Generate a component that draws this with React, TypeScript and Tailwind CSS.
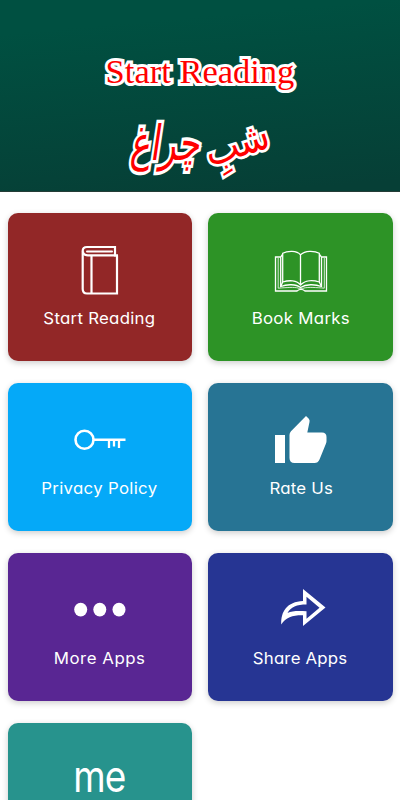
import React from "react";
import clsx from "clsx";

const BookIcon: React.FC = () => (
  <svg width="60" height="62" viewBox="0 0 60 62" fill="none" stroke="white" strokeWidth="2.2">
    <path d="M47 16.5V54.5H17Q12.7 54.5 12.7 50V12Q12.7 8 17 8H45V16.3H48" />
    <path d="M13 12.5Q13 16.3 18 16.3H46M21.5 17V54" />
    <path d="M42 12.5H17" strokeWidth="2" strokeLinecap="round" />
  </svg>
);

const BookmarkIcon: React.FC = () => (
  <svg width="66" height="56" viewBox="0 0 66 56" fill="none" stroke="white" strokeWidth="1.3" className="ml-[2px]">
    <path d="M32.5 12.8C29 8 19 8.8 14.7 11.3V40C21 38 29 38 32.5 43C37 38 45 38 51.3 40V11.3C47 8.8 37 8 32.5 12.8V43" />
    <path d="M14.5 12.5L12.7 15V44.5C19 42 28 42 32.5 45.5C38 42 47 42 53.5 44.5V15L51.5 12.5" />
    <path d="M14.7 40L12.7 44.5M51.3 40L53.5 44.5" />
    <path d="M12.5 15H7.5V49H29C31.5 47 34.5 47 37 49H58.5V15H54" />
    <path d="M10.2 16V46.2C18 45.5 27 45 30 46C32 47 34 47 36 46C40 45 49 45.5 56.3 46.2V16" strokeWidth=".8" />
  </svg>
);

const KeyIcon: React.FC = () => (
  <svg width="56" height="30" viewBox="0 0 56 30" fill="none" stroke="white" strokeWidth="2.6">
    <circle cx="12.5" cy="14.8" r="9" />
    <path d="M21.5 14.7H53.5" />
    <path d="M37 15V23M42 15V21.5M47 15V23" strokeWidth="2.3" />
  </svg>
);

const LikeIcon: React.FC = () => (
  <svg width="54" height="50" viewBox="0 0 54 50" fill="white" className="ml-[2px]">
    <path d="M1 20H11V48H1zM15.5 20Q15.5 18 17 16.3L32 1L34.8 3.7Q36 5 35.5 7L33.3 17.5H48Q52.5 17.5 52.5 22V26Q52.5 27 52 28.5L45.5 44.5Q44 48 40.5 48H20.5Q15.5 48 15.5 43z" />
  </svg>
);

const MoreIcon: React.FC = () => (
  <svg width="54" height="16" viewBox="0 0 54 16" fill="white">
    <ellipse cx="7.7" cy="7.6" rx="6.5" ry="6.8" />
    <ellipse cx="26.8" cy="7.6" rx="6.5" ry="6.8" />
    <ellipse cx="46" cy="7.6" rx="6.5" ry="6.8" />
  </svg>
);

const ShareIcon: React.FC = () => (
  <svg width="48" height="40" viewBox="0 0 48 40" fill="white" className="-mt-1 ml-[6px]">
    <path
      fillRule="evenodd"
      d="M24 1L46.5 19.5L24 38V27.2C14 27 7 29 2.3 36.5C1.5 24 8 13.5 24 13zM27.5 8.7V16.5C18 16.5 11.5 19 8.5 25C13 23 18 22.8 27.5 23.3V30.7L40.5 19.7z"
    />
  </svg>
);

const AboutIcon: React.FC = () => (
  <span className="-mt-2 inline-block scale-x-[0.86] text-[43px] leading-none tracking-[-1px]">
    me
  </span>
);

const cards = [
  { title: "Start Reading", color: "bg-[#922727]", icon: BookIcon, label: "tracking-[0.26px]" },
  { title: "Book Marks", color: "bg-[#2d9326]", icon: BookmarkIcon, label: "tracking-[0.3px]" },
  { title: "Privacy Policy", color: "bg-[#05a9f8]", icon: KeyIcon, label: "tracking-[0.3px]" },
  { title: "Rate Us", color: "bg-[#277494]", icon: LikeIcon, label: "tracking-[0.2px] ml-[2px]" },
  { title: "More Apps", color: "bg-[#592693]", icon: MoreIcon, label: "tracking-[0.5px]" },
  { title: "Share Apps", color: "bg-[#263593]", icon: ShareIcon, label: "tracking-[0.2px]" },
  { title: "", color: "bg-[#27938d]", icon: AboutIcon, label: "" },
];

const App: React.FC = () => {
  return (
    <main className="h-[800px] w-[400px] overflow-hidden bg-white font-['Inter',sans-serif]">
      <header className="flex h-[192px] flex-col items-center border-b border-[#243d36] bg-linear-[175deg,#005041_15%,#063f36_95%] pt-[50px] text-[#ff0000] [paint-order:stroke_fill] [-webkit-text-stroke:6px_white] [stroke-linejoin:round]">
        <h1 className="font-['Liberation_Serif',serif] text-[34.5px] leading-[42px] whitespace-nowrap">
          Start Reading
        </h1>
        <h2
          dir="rtl"
          lang="ur"
          className="mt-[22px] flex items-center font-['DejaVu_Sans',sans-serif] text-[36px] leading-[60px] [-webkit-text-stroke:5px_white]"
        >
          <span className="inline-block -rotate-[18deg] scale-y-[1.1]">شبِ</span>
          <span className="inline-block -skew-x-12 scale-x-[0.95] scale-y-[1.35]">چراغ</span>
        </h2>
      </header>
      <section className="grid grid-cols-2 gap-x-[16.5px] gap-y-[22px] pt-[21px] pr-[7.5px] pl-[7.5px]">
        {cards.map(({ title, color, icon: Icon, label }) => (
          <div
            key={color}
            className={clsx(
              "flex h-[148px] flex-col items-center rounded-[10px] text-white shadow-[0_2px_6px_rgba(0,0,0,0.2)]",
              color
            )}
          >
            <div className="mt-[26px] flex h-[62px] items-center justify-center">
              <Icon />
            </div>
            {title && (
              <p
                className={clsx(
                  "mt-[5px] scale-x-105 text-[16px] leading-6 whitespace-nowrap [font-feature-settings:'cv11']",
                  label
                )}
              >
                {title}
              </p>
            )}
          </div>
        ))}
      </section>
    </main>
  );
};

export default App;
